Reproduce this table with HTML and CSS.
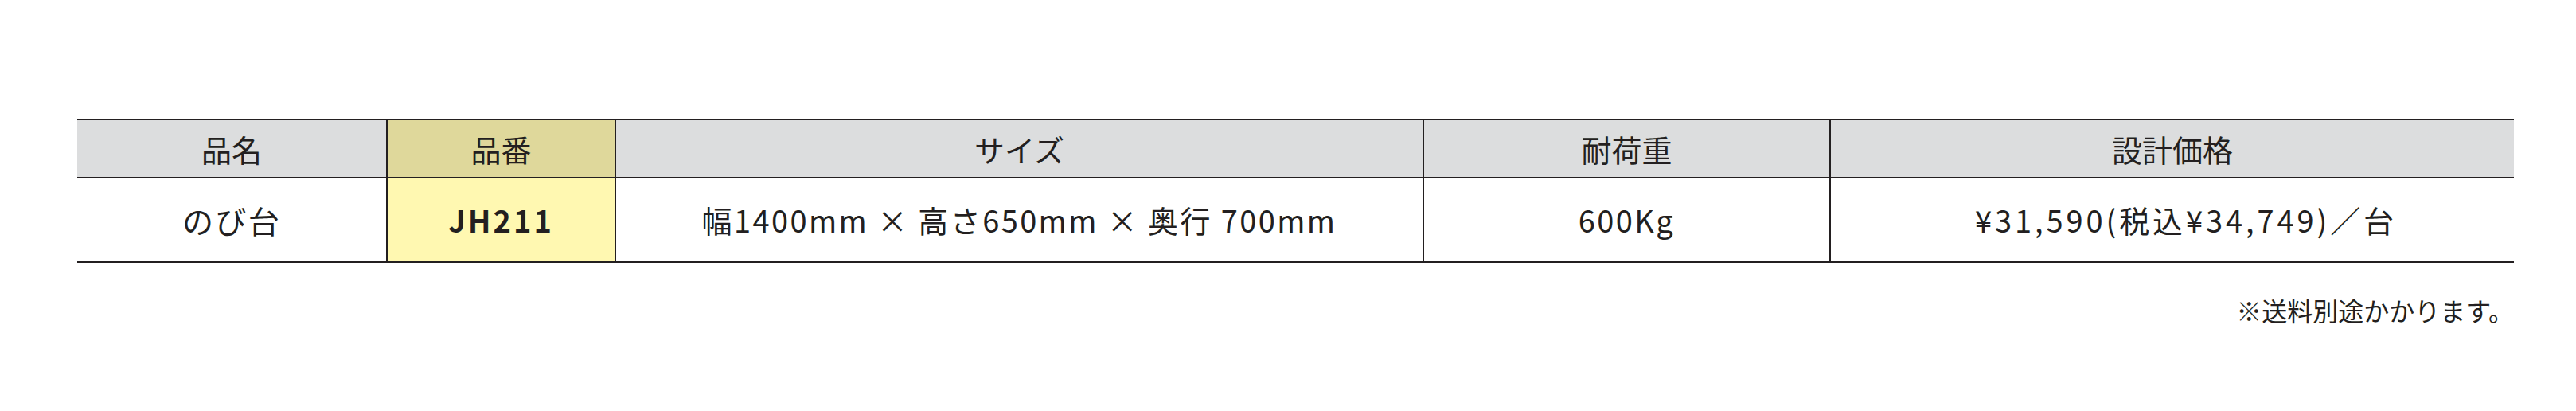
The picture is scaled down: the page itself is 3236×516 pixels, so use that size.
FILE: index.html
```html
<!DOCTYPE html>
<html lang="ja">
<head>
<meta charset="utf-8">
<title>のび台 仕様</title>
<link rel="stylesheet" href="styles.css">
</head>
<body>
<div class="sheet">
  <div class="spec">
    <div class="cell head">品名</div>
    <div class="cell head code-head">品番</div>
    <div class="cell head">サイズ</div>
    <div class="cell head">耐荷重</div>
    <div class="cell head">設計価格</div>

    <div class="cell data name">のび台</div>
    <div class="cell data code">JH211</div>
    <div class="cell data">幅1400mm × 高さ650mm × 奥行 700mm</div>
    <div class="cell data">600Kg</div>
    <div class="cell data price">¥31,590(税込¥34,749)／台</div>
  </div>
  <p class="note">※送料別途かかります。</p>
</div>
</body>
</html>
```

FILE: styles.css
```css
html, body {
  margin: 0;
  padding: 0;
  background: #ffffff;
}

body {
  font-family: "Noto Sans CJK JP", "Noto Sans", sans-serif;
  color: #231f20;
}

.sheet {
  padding: 149px 0 0 97px;
  width: 3061px;
}

.spec {
  display: grid;
  grid-template-columns: 388px 287px 1015px 511px 860px;
  border-top: 2px solid #231f20;
  border-bottom: 2px solid #231f20;
}

.cell {
  display: flex;
  align-items: center;
  justify-content: center;
  border-left: 2px solid #231f20;
  white-space: nowrap;
}

.cell:nth-child(5n+1) {
  border-left: none;
}

.head {
  height: 71px;
  background: #dcddde;
  border-bottom: 2px solid #231f20;
  font-size: 38px;
  line-height: 1;
}

.code-head {
  background: #dfd89b;
}

.data {
  height: 104px;
  font-size: 38px;
  line-height: 1;
  letter-spacing: 2.4px;
}

.name {
  font-size: 39px;
}

.code {
  background: #fff8b1;
  font-weight: 700;
  letter-spacing: 3px;
}

.price {
  letter-spacing: 3.9px;
  padding-left: 34px;
}

.note {
  margin: 40px 0 0;
  text-align: right;
  font-size: 32px;
  line-height: 38px;
}
```
